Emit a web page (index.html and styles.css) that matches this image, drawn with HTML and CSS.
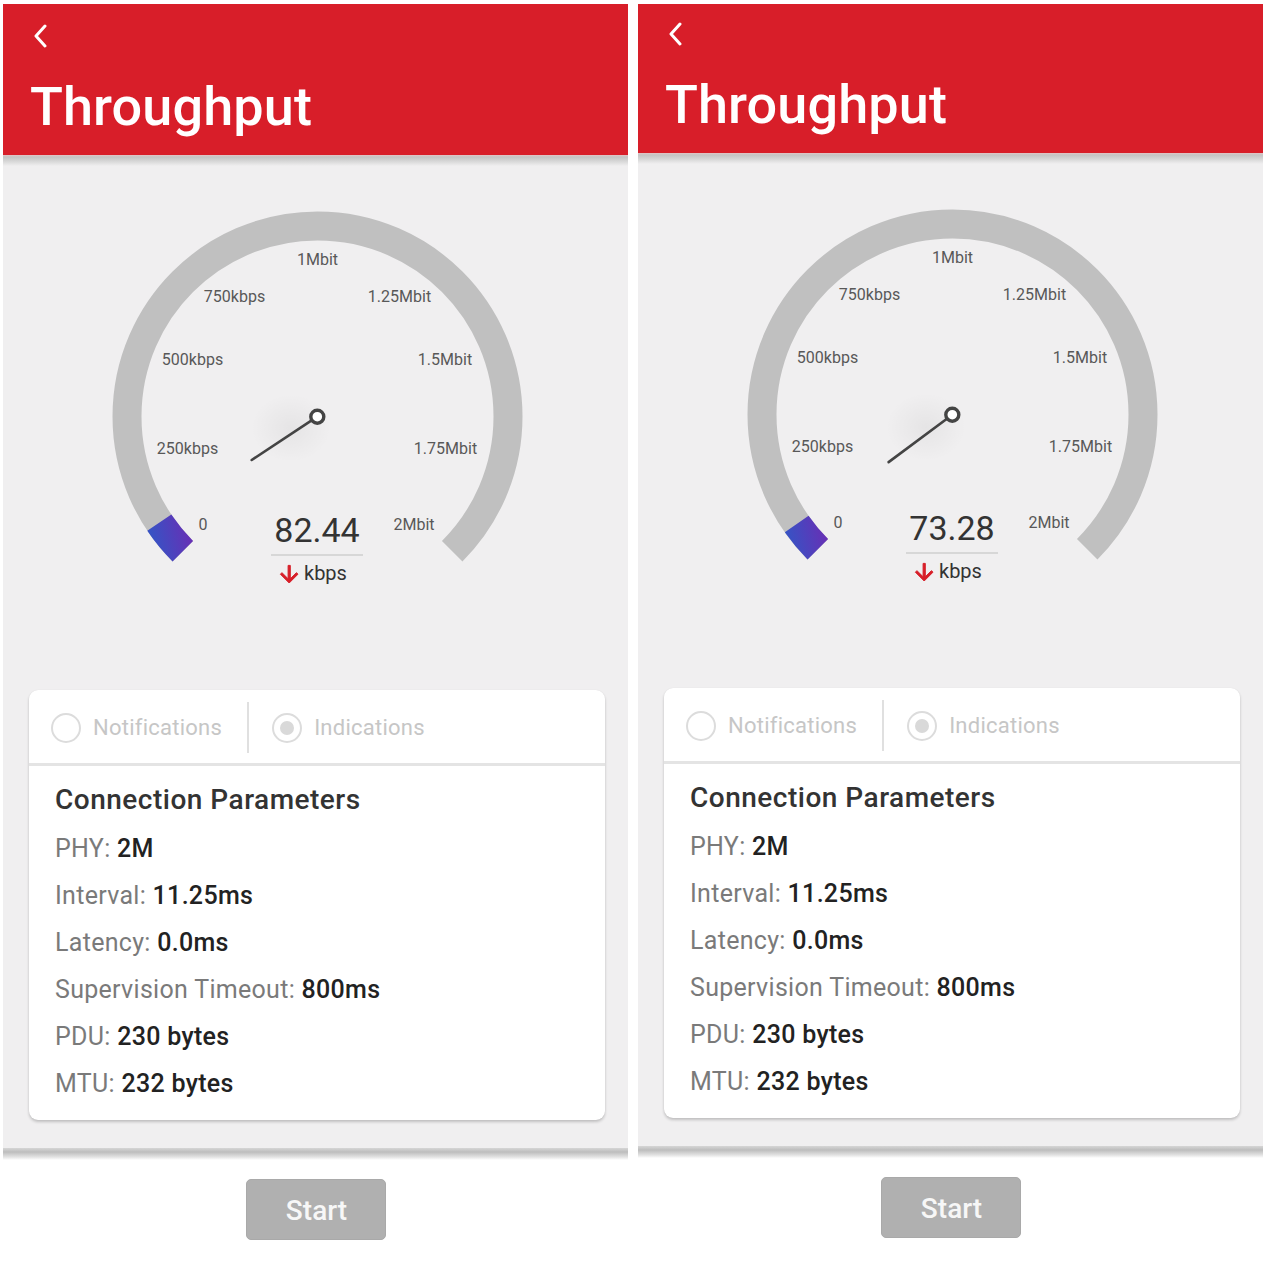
FILE: index.html
```html
<!DOCTYPE html>
<html lang="en">
<head>
<meta charset="utf-8">
<title>Throughput</title>
<link rel="stylesheet" href="styles.css">
</head>
<body>
<div class="screens">
  <section class="phone">
    <header class="appbar">
      <svg class="back" width="14" height="24" viewBox="0 0 14 24"><polyline points="12,2 3,12 12,22" fill="none" stroke="#fff" stroke-width="3" stroke-linecap="round" stroke-linejoin="round"/></svg>
      <h1 class="title">Throughput</h1>
    </header>
    <div class="shade-top"></div>
    <main class="content">
      <svg class="gauge" width="625" height="500" viewBox="0 0 625 500">
        <defs>
          <linearGradient id="g1" gradientUnits="userSpaceOnUse" x1="150" y1="375" x2="190" y2="365">
            <stop offset="0" stop-color="#3852c4"/>
            <stop offset="1" stop-color="#6b2db4"/>
          </linearGradient>
          <radialGradient id="sh1" cx="0.5" cy="0.5" r="0.5">
            <stop offset="0" stop-color="#000" stop-opacity="0.045"/>
            <stop offset="1" stop-color="#000" stop-opacity="0"/>
          </radialGradient>
        </defs>
        <path d="M179.8 385.2 A190.5 190.5 0 1 1 449.2 385.2" fill="none" stroke="#c0c0c0" stroke-width="29"/>
        <path d="M179.8 385.2 A190.5 190.5 0 0 1 156.3 356.7" fill="none" stroke="url(#g1)" stroke-width="29"/>
        <g class="ticks">
          <text x="314.5" y="98.5">1Mbit</text>
          <text x="231.5" y="136.2">750kbps</text>
          <text x="396.5" y="136.2">1.25Mbit</text>
          <text x="189.5" y="199.2">500kbps</text>
          <text x="442" y="199.2">1.5Mbit</text>
          <text x="184.5" y="288.2">250kbps</text>
          <text x="442.5" y="288.2">1.75Mbit</text>
          <text x="200" y="364.2">0</text>
          <text x="411" y="364.2">2Mbit</text>
        </g>
        <ellipse cx="288" cy="262" rx="40" ry="34" fill="url(#sh1)"/>
        <line x1="314.3" y1="250.7" x2="248.7" y2="294" stroke="#444" stroke-width="2.6" stroke-linecap="round"/>
        <circle cx="314.3" cy="250.7" r="6.5" fill="#fff" stroke="#444" stroke-width="3.4"/>
        <text class="value" x="314" y="376">82.44</text>
        <line x1="268" y1="389" x2="360" y2="389" stroke="#cfcfcf" stroke-width="1.5"/>
        <path transform="translate(273 395) scale(1.1)" d="M20 12l-1.41-1.41L13 16.17V4h-2v12.17l-5.58-5.59L4 12l8 8 8-8z" fill="#d71e28" stroke="#d71e28" stroke-width="0.9" stroke-linejoin="round"/>
        <text class="unit" x="301" y="414">kbps</text>
      </svg>
      <div class="card">
        <div class="radios">
          <span class="radio"><span class="ring"></span><span class="rlabel">Notifications</span></span>
          <span class="vdiv"></span>
          <span class="radio"><span class="ring checked"></span><span class="rlabel">Indications</span></span>
        </div>
        <div class="params">
          <h2 class="heading">Connection Parameters</h2>
          <p class="row"><span class="key">PHY:</span> <span class="val">2M</span></p>
          <p class="row"><span class="key">Interval:</span> <span class="val">11.25ms</span></p>
          <p class="row"><span class="key">Latency:</span> <span class="val">0.0ms</span></p>
          <p class="row"><span class="key">Supervision Timeout:</span> <span class="val">800ms</span></p>
          <p class="row"><span class="key">PDU:</span> <span class="val">230 bytes</span></p>
          <p class="row"><span class="key">MTU:</span> <span class="val">232 bytes</span></p>
        </div>
      </div>
    </main>
    <div class="shade-bottom"></div>
    <footer class="actions"><button class="start" type="button">Start</button></footer>
  </section>

  <section class="phone alt">
    <header class="appbar">
      <svg class="back" width="14" height="24" viewBox="0 0 14 24"><polyline points="12,2 3,12 12,22" fill="none" stroke="#fff" stroke-width="3" stroke-linecap="round" stroke-linejoin="round"/></svg>
      <h1 class="title">Throughput</h1>
    </header>
    <div class="shade-top"></div>
    <main class="content">
      <svg class="gauge" width="625" height="500" viewBox="0 0 625 500">
        <defs>
          <linearGradient id="g2" gradientUnits="userSpaceOnUse" x1="150" y1="375" x2="190" y2="365">
            <stop offset="0" stop-color="#3852c4"/>
            <stop offset="1" stop-color="#6b2db4"/>
          </linearGradient>
          <radialGradient id="sh2" cx="0.5" cy="0.5" r="0.5">
            <stop offset="0" stop-color="#000" stop-opacity="0.045"/>
            <stop offset="1" stop-color="#000" stop-opacity="0"/>
          </radialGradient>
        </defs>
        <path d="M179.8 385.2 A190.5 190.5 0 1 1 449.2 385.2" fill="none" stroke="#c0c0c0" stroke-width="29"/>
        <path d="M179.8 385.2 A190.5 190.5 0 0 1 158.7 360.0" fill="none" stroke="url(#g2)" stroke-width="29"/>
        <g class="ticks">
          <text x="314.5" y="98.5">1Mbit</text>
          <text x="231.5" y="136.2">750kbps</text>
          <text x="396.5" y="136.2">1.25Mbit</text>
          <text x="189.5" y="199.2">500kbps</text>
          <text x="442" y="199.2">1.5Mbit</text>
          <text x="184.5" y="288.2">250kbps</text>
          <text x="442.5" y="288.2">1.75Mbit</text>
          <text x="200" y="364.2">0</text>
          <text x="411" y="364.2">2Mbit</text>
        </g>
        <ellipse cx="288" cy="263" rx="40" ry="34" fill="url(#sh2)"/>
        <line x1="314.3" y1="250.7" x2="250.6" y2="298.1" stroke="#444" stroke-width="2.6" stroke-linecap="round"/>
        <circle cx="314.3" cy="250.7" r="6.5" fill="#fff" stroke="#444" stroke-width="3.4"/>
        <text class="value" x="314" y="376">73.28</text>
        <line x1="268" y1="389" x2="360" y2="389" stroke="#cfcfcf" stroke-width="1.5"/>
        <path transform="translate(273 395) scale(1.1)" d="M20 12l-1.41-1.41L13 16.17V4h-2v12.17l-5.58-5.59L4 12l8 8 8-8z" fill="#d71e28" stroke="#d71e28" stroke-width="0.9" stroke-linejoin="round"/>
        <text class="unit" x="301" y="414">kbps</text>
      </svg>
      <div class="card">
        <div class="radios">
          <span class="radio"><span class="ring"></span><span class="rlabel">Notifications</span></span>
          <span class="vdiv"></span>
          <span class="radio"><span class="ring checked"></span><span class="rlabel">Indications</span></span>
        </div>
        <div class="params">
          <h2 class="heading">Connection Parameters</h2>
          <p class="row"><span class="key">PHY:</span> <span class="val">2M</span></p>
          <p class="row"><span class="key">Interval:</span> <span class="val">11.25ms</span></p>
          <p class="row"><span class="key">Latency:</span> <span class="val">0.0ms</span></p>
          <p class="row"><span class="key">Supervision Timeout:</span> <span class="val">800ms</span></p>
          <p class="row"><span class="key">PDU:</span> <span class="val">230 bytes</span></p>
          <p class="row"><span class="key">MTU:</span> <span class="val">232 bytes</span></p>
        </div>
      </div>
    </main>
    <div class="shade-bottom"></div>
    <footer class="actions"><button class="start" type="button">Start</button></footer>
  </section>
</div>
</body>
</html>
```

FILE: styles.css
```css
* { box-sizing: border-box; }

html, body {
  margin: 0;
  padding: 0;
  background: #ffffff;
  font-family: Roboto, "Noto Sans", "Liberation Sans", sans-serif;
}

.screens {
  display: flex;
  gap: 10px;
  padding: 4px 3px 0 3px;
}

.phone {
  width: 625px;
  flex: 0 0 625px;
  display: flex;
  flex-direction: column;
  background: #ffffff;
}

.appbar {
  height: 151px;
  background: #d81e29;
  padding: 20px 0 0 27px;
  display: flex;
  flex-direction: column;
}

.alt .appbar {
  height: 149px;
  padding-top: 18px;
}

.back {
  display: block;
  margin-left: 3px;
}

.title {
  margin: 32px 0 0 0;
  font-size: 54px;
  line-height: 54px;
  font-weight: 500;
  color: #ffffff;
  letter-spacing: 0.1px;
}

.shade-top {
  height: 11px;
  background: linear-gradient(#e3c5c7 0, #c4c4c4 2px, #d6d6d6 6px, #f0eff0 11px);
}

.content {
  background: #f0eff0;
  display: flex;
  flex-direction: column;
  padding-bottom: 28px;
}

.gauge {
  display: block;
}

.ticks text {
  font-family: Roboto, "Noto Sans", sans-serif;
  font-size: 16px;
  fill: #585858;
  text-anchor: middle;
}

.value {
  font-family: Roboto, sans-serif;
  font-size: 34px;
  fill: #333333;
  text-anchor: middle;
}

.unit {
  font-family: Roboto, sans-serif;
  font-size: 20px;
  fill: #333333;
}

.card {
  margin: 24px 23px 0 26px;
  background: #ffffff;
  border-radius: 9px;
  box-shadow: 0 2px 3px rgba(0, 0, 0, 0.2), 0 0 1px rgba(0, 0, 0, 0.08);
  overflow: hidden;
}

.radios {
  height: 76px;
  display: flex;
  align-items: center;
  padding: 2px 0 0 22px;
  border-bottom: 3px solid #e4e4e4;
}

.radio {
  display: flex;
  align-items: center;
  gap: 12px;
}

.ring {
  width: 30px;
  height: 30px;
  border: 2.5px solid #dcdcdc;
  border-radius: 50%;
  display: grid;
  place-items: center;
}

.ring.checked::after {
  content: "";
  width: 14px;
  height: 14px;
  border-radius: 50%;
  background: #d9d9d9;
}

.rlabel {
  font-size: 22px;
  letter-spacing: 0.25px;
  color: #c6c6c6;
}

.vdiv {
  width: 2px;
  height: 51px;
  background: #e0e0e0;
  margin: 0 23px 0 25px;
}

.params {
  padding: 16px 20px 13px 26px;
}

.heading {
  margin: 0 0 7px 0;
  font-size: 28px;
  line-height: 36px;
  font-weight: 500;
  letter-spacing: 0.5px;
  color: #333333;
}

.row {
  margin: 0;
  font-size: 25px;
  line-height: 47px;
  letter-spacing: 0.3px;
  color: #7a7a7a;
  white-space: nowrap;
}

.val {
  color: #222222;
  font-weight: 500;
}

.shade-bottom {
  height: 12px;
  background: linear-gradient(#d6d6d6 0, #bdbdbd 4px, #e2e2e2 9px, #ffffff 12px);
}

.actions {
  display: flex;
  justify-content: center;
  padding: 19px 0 38px 0;
}

.start {
  width: 140px;
  height: 61px;
  border: 1px solid #a9a9a9;
  border-radius: 5px;
  background: #b0b0b0;
  color: #f7f7f7;
  font-family: Roboto, sans-serif;
  font-size: 28px;
  font-weight: 500;
  padding: 0 0 0 2px;
  line-height: 61px;
}
```
